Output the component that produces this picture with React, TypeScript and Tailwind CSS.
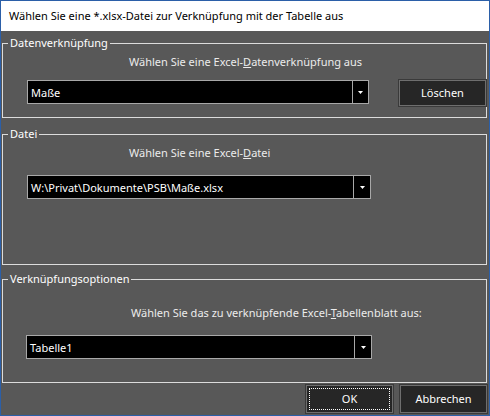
import React from "react";

const font = { fontFamily: '"Noto Sans", "Liberation Sans", sans-serif' };

function Combo({ value, textW, btnW }: { value: string; textW: string; btnW: string }) {
  return (
    <div className="flex h-[24px]">
      <div className={`${textW} h-full bg-black border border-[#a8a8a8] flex items-center pl-[3px] text-white text-[11px] leading-none`}>
        {value}
      </div>
      <div className={`${btnW} h-full bg-black border border-[#a8a8a8] border-l-0 flex items-center justify-center`}>
        <svg width="5" height="3" viewBox="0 0 5 3">
          <path d="M0 0h5L2.5 3z" fill="#ffffff" />
        </svg>
      </div>
    </div>
  );
}

function Btn({ children, focus, w }: { children: React.ReactNode; focus?: boolean; w: string }) {
  return (
    <div className={`${w} h-full relative bg-[#262626] border border-[#6e6e6e] outline outline-1 outline-[#3a3a3a] flex items-center justify-center text-white text-[11px]`}>
      {focus && <div className="absolute inset-[2px] border border-dotted border-white" />}
      <span className="relative">{children}</span>
    </div>
  );
}

function Group({ title, className, children }: { title: string; className: string; children: React.ReactNode }) {
  return (
    <fieldset className={`mx-[1px] mr-[2px] border border-[#dcdcdc] ${className}`}>
      <legend className="ml-[5px] px-[2px] text-white text-[11px] leading-[16px]">{title}</legend>
      {children}
    </fieldset>
  );
}

export default function App() {
  return (
    <div className="w-[490px] h-[416px] border border-[#2b5fa8] flex flex-col bg-[#585858]" style={font}>
      <div className="h-[30px] bg-white flex items-center pl-[8px] text-[11px] text-black shrink-0">
        Wählen Sie eine *.xlsx-Datei zur Verknüpfung mit der Tabelle aus
      </div>
      <div className="flex flex-col flex-1 pt-[4px]">
        <Group title="Datenverknüpfung" className="pb-[11px]">
          <div className="mt-[3px] pl-[126px] text-[#ececec] text-[11px] leading-[16px]">
            Wählen Sie eine Excel-<span className="underline">D</span>atenverknüpfung aus
          </div>
          <div className="mt-[10px] flex items-end h-[26px] pl-[24px]">
            <div className="mb-[2px]"><Combo value="Maße" textW="w-[326px]" btnW="w-[16px]" /></div>
            <div className="ml-[30px] h-full"><Btn w="w-[87px]">Löschen</Btn></div>
          </div>
        </Group>
        <Group title="Datei" className="mt-[8px] pb-[65px]">
          <div className="mt-[3px] pl-[126px] text-[#ececec] text-[11px] leading-[16px]">
            Wählen Sie eine Excel-<span className="underline">D</span>atei
          </div>
          <div className="mt-[14px] pl-[24px]">
            <Combo value="W:\Privat\Dokumente\PSB\Maße.xlsx" textW="w-[327px]" btnW="w-[17px]" />
          </div>
        </Group>
        <Group title="Verknüpfungsoptionen" className="mt-[6px] pb-[23px]">
          <div className="mt-[18px] pl-[128px] text-[#ececec] text-[11px] leading-[16px]">
            Wählen Sie das zu verknüpfende Excel-<span className="underline">T</span>abellenblatt aus:
          </div>
          <div className="mt-[14px] pl-[23px]">
            <Combo value="Tabelle1" textW="w-[329px]" btnW="w-[17px]" />
          </div>
        </Group>
        <div className="mt-[2px] h-[28px] flex justify-end gap-[7px] pr-[2px]">
          <Btn w="w-[87px]" focus>OK</Btn>
          <Btn w="w-[87px]">Abbrechen</Btn>
        </div>
      </div>
    </div>
  );
}
